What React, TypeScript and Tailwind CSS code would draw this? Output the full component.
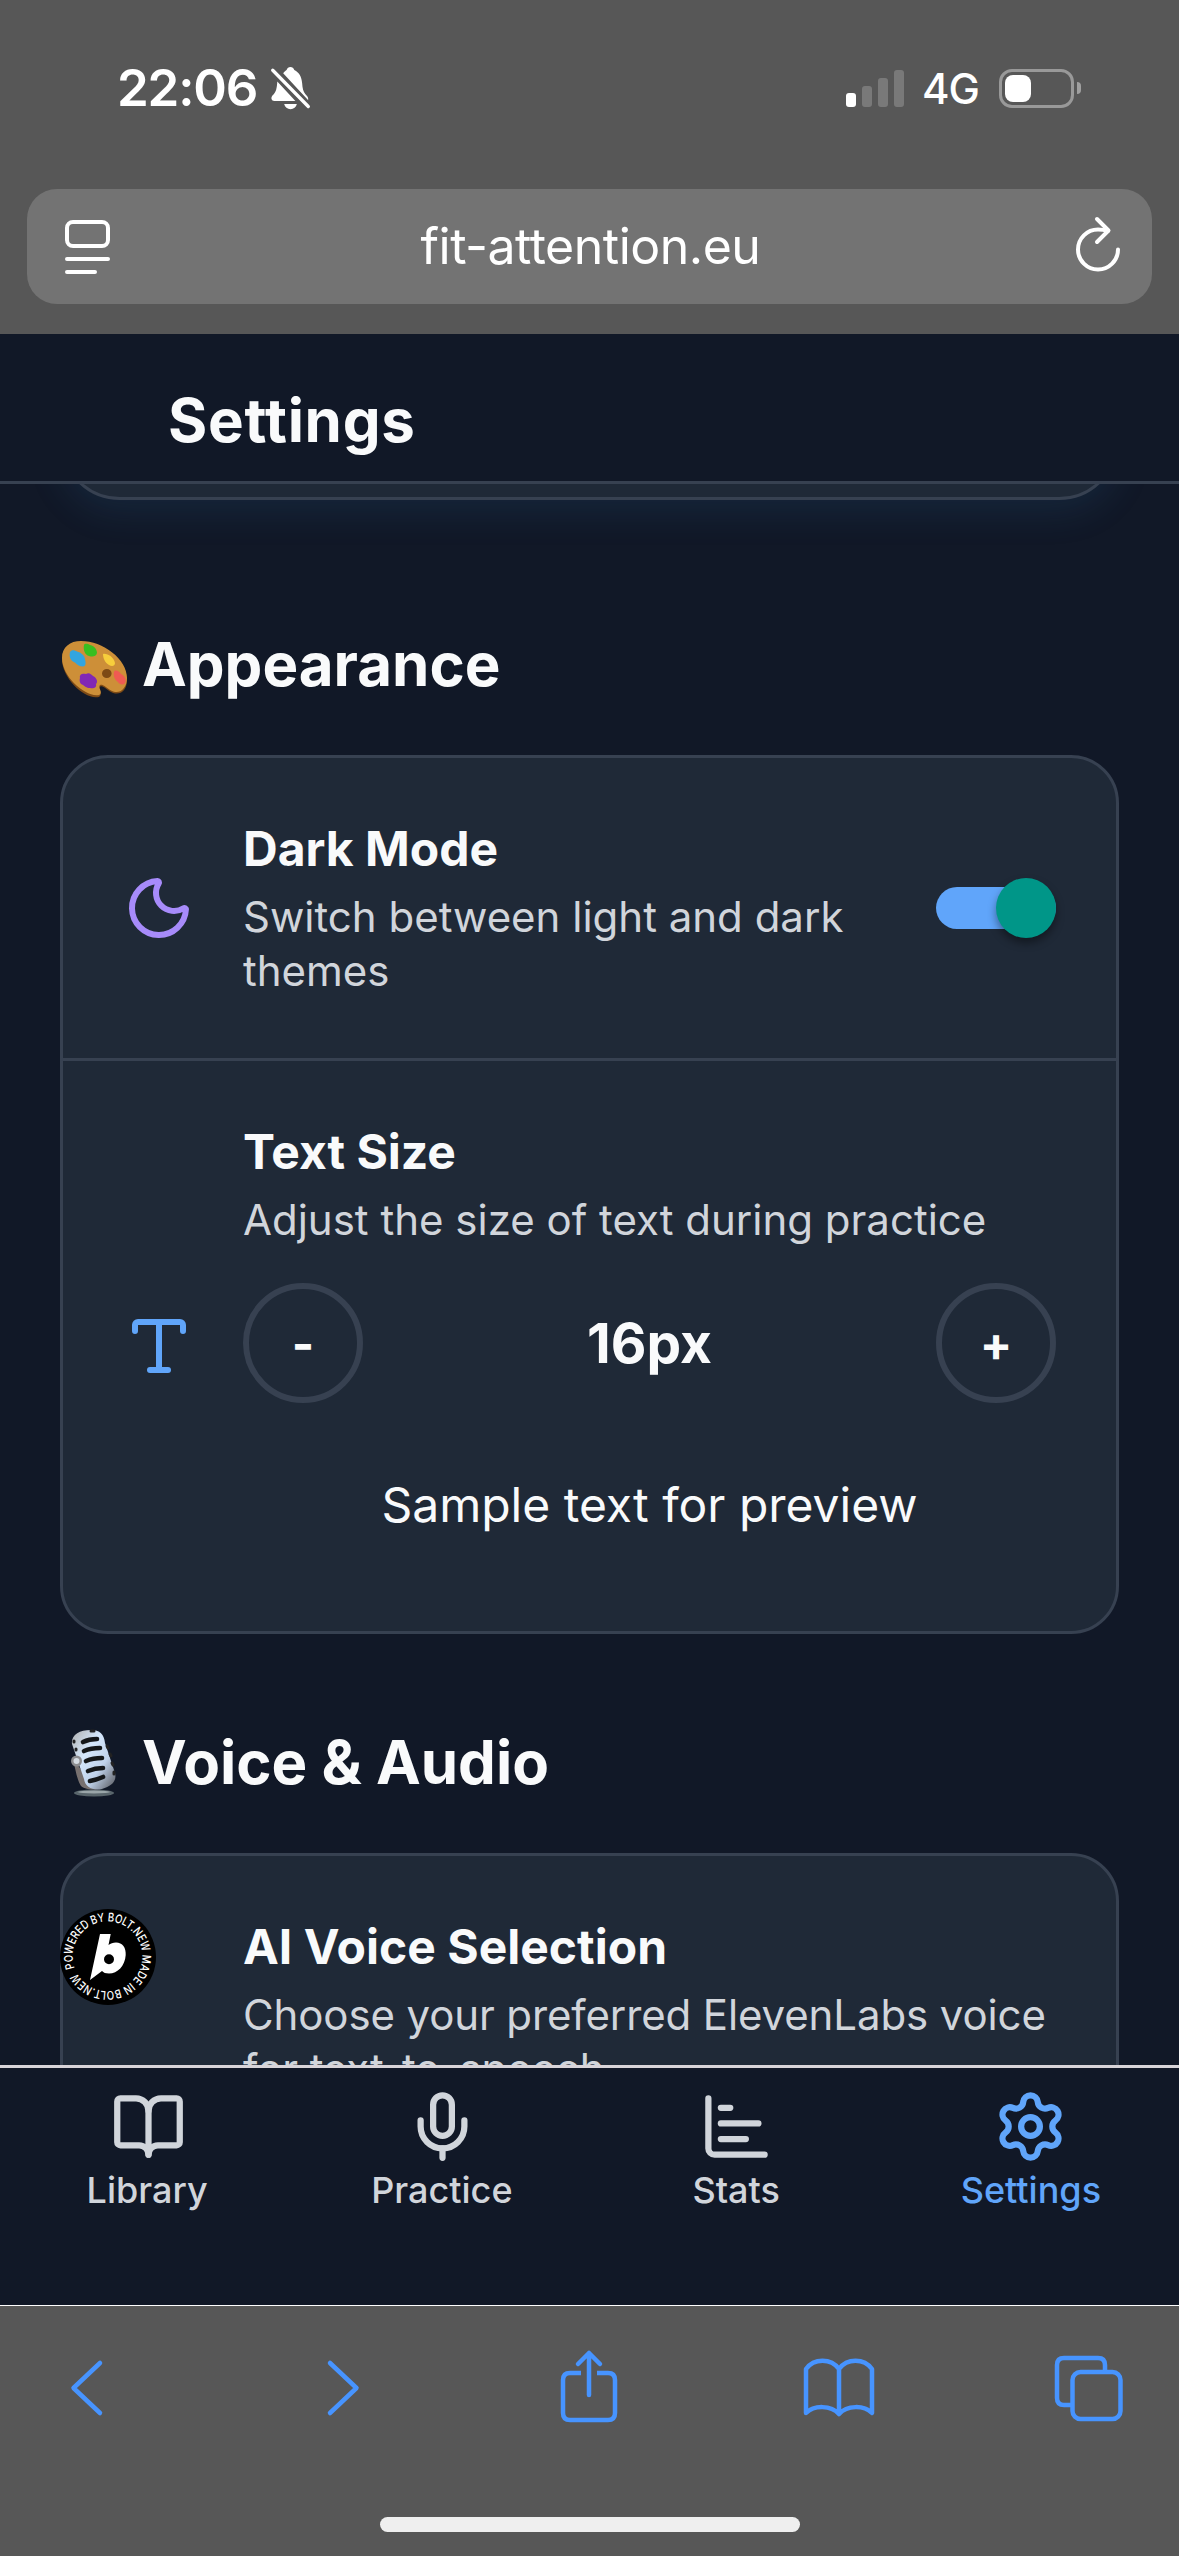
import React from 'react'
import { BookOpen, ChartBar, Mic, Moon, Settings, Type } from 'lucide-react'

function StatusBar() {
  return (
    <div className="flex h-[189px] items-start justify-between pl-[117px] pr-[98px] pt-[57px]">
      <div className="flex items-center">
        <span className="text-[51px] leading-[62px] font-semibold tracking-[-1.2px] text-white">22:06</span>
        <svg className="ml-[13px] h-[44px] w-[41px]" viewBox="0 0 42 44" preserveAspectRatio="none" fill="white">
          <path d="M13.5 7.2C15 5.6 16 4.6 17 4c.6-2 2-3 3.900-3s3.400 1 4 3c5 2.400 7.500 6.800 8 13 .4 5.500 1.200 8.600 3.200 11 2 2.200 3.400 3.400 3 6.200z" />
          <path d="M7.500 15.500 26 35H4.500C1.300 35 .6 32 2.500 29.600 6.500 26 7 22 7.500 15.500z" />
          <path d="M14.500 38h13c-.8 3.400-3.300 5.200-6.500 5.200s-5.700-1.800-6.500-5.200z" />
          <path d="M2.800 4.200 39.200 40.500" stroke="#575757" strokeWidth="8" />
          <path d="M2.800 4.200 39.200 40.500" stroke="white" strokeWidth="3.400" strokeLinecap="round" />
        </svg>
      </div>
      <div className="flex h-[62px] items-center">
        <div className="flex h-[37px] items-end gap-[6px]">
          <div className="h-[14px] w-[10px] rounded-[3px] bg-white"></div>
          <div className="h-[21px] w-[10px] rounded-[3px] bg-[#797979]"></div>
          <div className="h-[29px] w-[10px] rounded-[3px] bg-[#797979]"></div>
          <div className="h-[37px] w-[10px] rounded-[3px] bg-[#797979]"></div>
        </div>
        <span className="ml-[18px] w-[60px] pt-[2px] text-[42px] leading-[50px] font-medium tracking-[-1px] text-white">4G</span>
        <div className="ml-[17px] h-[39px] w-[75px] rounded-[13px] border-[3px] border-[#999999] p-[3px]">
          <div className="h-[27px] w-[26px] rounded-[8px] bg-white"></div>
        </div>
        <div className="ml-[3px] h-[12px] w-[4px] rounded-r-full bg-[#a0a0a0]"></div>
      </div>
    </div>
  )
}

function AddressBar() {
  return (
    <div className="mx-[27px] flex h-[115px] items-center justify-between rounded-[30px] bg-[#737373] pl-[37px] pr-[31px]">
      <svg className="h-[56px] w-[48px]" viewBox="0 0 48 56" fill="none" stroke="white" strokeWidth="4" strokeLinecap="round">
        <rect x="3" y="3" width="41" height="24" rx="6" />
        <path d="M3 40h41M3 53h28" />
      </svg>
      <span className="mr-[6px] mb-[2px] text-[50px] leading-[60px] tracking-[-0.5px] text-white">fit-attention.eu</span>
      <svg className="mb-[5px] h-[58px] w-[46px]" viewBox="0 0 46 58" fill="none" stroke="white" strokeWidth="4" strokeLinecap="round" strokeLinejoin="round">
        <path d="M43 34.500A20 20 0 1 1 23 14.500c3.500 0 6.500.4 10 1.500" />
        <path d="m22 4 11.500 11.500L22 27" />
      </svg>
    </div>
  )
}

function PaletteIcon() {
  return (
    <svg className="mr-[13px] h-[72px] w-[69px]" viewBox="0 0 69 72">
      <path d="M2 31C2 20 10 14 21 14c22 0 46 18 46 38C67 61 62 66.500 55 65.500c-5-1-8-5-12-6.800-3.500-1.500-4 1-2.700 4.500 1 4-.1 6-3.800 6C23 70 2 50 2 31z" fill="#7d4a15" />
      <path fillRule="evenodd" d="M2 30C2 19 10 13 21 13c22 0 46 18 46 37C67 59.500 61 65 55 64c-5-1-8-5-12-6.800-3.500-1.500-4.600 1-2.800 4.500 1.500 3.500.4 5.800-3.700 5.500C23 67 2 48 2 30zm40 15.500a4.800 4.500 0 1 0 9.600 0 4.800 4.500 0 1 0-9.600 0z" fill="#cd8f38" />
      <path d="M10 24c2-3 5-1.500 7-.5 4 1 8 4 8 8 1 3 1 7-2 7-4 0-6-2-8-4-5-2-6-6-5-10.500z" fill="#32a5df" />
      <path d="M24 17c1-2 4-1 6 0 5 1 7 5 7 8-1 4-5 4-8 3-4-1-6-6-5-11z" fill="#38bf20" />
      <path d="M43 26c4-1 11 3 12 9 0 3-3 4-6 2-4-2-6-7-6-11z" fill="#f7ce3c" />
      <path d="M54 44c1-3 5-1 7 2 4 2 6 6 4 9-2 3-6 1-7-1-3-2-5-6-4-10z" fill="#ef5b52" />
      <path d="M20 50c-1-4 3-5 6-4 3-2 5 0 7 2 4 2 5 6 3 8 1 4-3 5-6 4-4 0-5-2-7-3-3-1-4-4-3-7z" fill="#8128b4" />
    </svg>
  )
}

function MicrophoneIcon() {
  return (
    <svg className="mr-[13px] h-[72px] w-[69px]" viewBox="0 0 69 72">
      <defs>
        <linearGradient id="metal" x1="0" y1="0" x2="1" y2="1">
          <stop offset="0" stopColor="#b0b0b0" />
          <stop offset=".35" stopColor="#d5e7fb" />
          <stop offset=".65" stopColor="#c0d2ea" />
          <stop offset="1" stopColor="#55555a" />
        </linearGradient>
      </defs>
      <ellipse cx="34" cy="67" rx="20" ry="3.500" fill="#59656b" />
      <ellipse cx="34" cy="66" rx="16" ry="1.500" fill="#9aa5a8" />
      <path d="M13 32c2 10 4 22 8 28 4 4 16 5 22 1l-3-5c-8 2-14-1-16-8z" fill="#77706f" />
      <path d="M12 18C11 9 19 4 31 4c9 0 13 4 14 13l10 30c2 8-3 13-13 16-9 2-17-2-18-10z" fill="url(#metal)" />
      <g stroke="#151719" strokeWidth="4.600" strokeLinecap="round">
        <path d="M23 16q6-3 14-3" />
        <path d="M24 25q7-3 16-3" />
        <path d="M26 35q7-3 16-3" />
        <path d="M28 45q7-3 15-3" />
        <path d="M30 55q6-1 13-4" />
      </g>
      <path d="M14 15v1M16 23v1M47 20l1 2M50 28l1 2M52 37l1 2M54 46v2M31 5h3" stroke="#222" strokeWidth="3" strokeLinecap="round" />
      <circle cx="16.500" cy="35" r="5.500" fill="#8c8c8f" />
      <circle cx="16.500" cy="35" r="3" fill="#d5dbe2" />
    </svg>
  )
}

function BoltBadge() {
  return (
    <svg className="absolute left-[60px] top-[1425px] h-[96px] w-[96px]" viewBox="0 0 96 96">
      <defs>
        <path id="ring" d="M14.700 59A34.800 34.800 0 1 1 19.500 68A34.800 34.800 0 0 1 14.700 59" />
      </defs>
      <circle cx="48" cy="48" r="48" fill="black" />
      <text fill="white" fontSize="12" fontWeight="500">
        <textPath href="#ring" textLength="213" lengthAdjust="spacingAndGlyphs">POWERED BY BOLT.NEW MADE IN BOLT.NEW</textPath>
      </text>
      {/* bolt mark */}
      <path
        fillRule="evenodd"
        d="M40 25h10.700l-2.200 11c2-1.800 4.500-2.600 7.500-2.600 6.500.2 10.200 5 9.700 12.600C65 57 57.500 64.500 49 64.500c-3.500 0-5.500-.8-7-2.500L30 71zM44 50.300a5 5 0 1 0 10 0 5 5 0 1 0-10 0z"
        fill="white"
      />
    </svg>
  )
}

function Header() {
  return (
    <div className="h-[150px] border-b-[3px] border-[#374151] pl-[168px] pt-[50px]">
      <h1 className="text-[60px] leading-[72px] font-bold tracking-[0.7px]">Settings</h1>
    </div>
  )
}

function SettingText({ title, text }: { title: string; text: string }) {
  return (
    <>
      <p className="mb-[12px] text-[48px] leading-[58px] font-bold">{title}</p>
      <p className="text-[42px] leading-[54px] text-[#d1d5db]">{text}</p>
    </>
  )
}

function TabBar() {
  return (
    <div className="flex h-[240px] border-t-[3px] border-[#d8d4d9] px-[1px] pt-[21px] text-[36px] leading-[44px] font-medium text-[#d1d5db]">
      <div className="flex flex-1 flex-col items-center gap-[4px]">
        <BookOpen size={75} />
        <span className="mr-[2px]">Library</span>
      </div>
      <div className="flex flex-1 flex-col items-center gap-[4px]">
        <Mic size={75} />
        <span className="mr-[1px]">Practice</span>
      </div>
      <div className="flex flex-1 flex-col items-center gap-[4px]">
        <ChartBar size={75} />
        <span className="mr-[1px]">Stats</span>
      </div>
      <div className="flex flex-1 flex-col items-center gap-[4px] text-[#60a5fa]">
        <Settings size={75} />
        <span>Settings</span>
      </div>
    </div>
  )
}

function BrowserToolbar() {
  return (
    <div className="flex h-[251px] flex-col items-center border-t border-white bg-[#575757]">
      <div className="flex h-[211px] w-full items-start pl-[69px] pt-[43px] text-[#4794ff]">
        <svg className="h-[76px] w-[36px]" viewBox="0 0 36 76" fill="none" stroke="currentColor" strokeWidth="4.500" strokeLinecap="round" strokeLinejoin="round">
          <path d="M31 14 4.500 39 31 64" />
        </svg>
        <svg className="ml-[220px] h-[76px] w-[36px]" viewBox="0 0 36 76" fill="none" stroke="currentColor" strokeWidth="4.500" strokeLinecap="round" strokeLinejoin="round">
          <path d="M5 14 31.500 39 5 64" />
        </svg>
        <svg className="ml-[198px] h-[76px] w-[60px]" viewBox="0 0 60 76" fill="none" stroke="currentColor" strokeWidth="4.500" strokeLinejoin="round">
          <path d="M22 24h-11q-7 0-7 7v33q0 7 7 7h38q7 0 7-7v-33q0-7-7-7h-11" />
          <path d="M30 46V4M19 15 30 4l11 11" strokeLinecap="round" />
        </svg>
        <svg className="ml-[184px] h-[76px] w-[72px]" viewBox="0 0 72 76" fill="none" stroke="currentColor" strokeWidth="4.500" strokeLinecap="round" strokeLinejoin="round">
          <path d="M36 20C28 9 11 9 3 20v44c8-8 25-8 33 1 8-9 25-9 33-1V20C61 9 44 9 36 20zv45" />
        </svg>
        <svg className="ml-[179px] h-[76px] w-[70px]" viewBox="0 0 70 76" fill="none" stroke="currentColor" strokeWidth="4.500">
          <rect x="18.500" y="23" width="48" height="47" rx="8" />
          <path d="M18 56h-8q-7 0-7-7V16q0-7 7-7h34q7 0 7 7v7" />
        </svg>
      </div>
      <div className="h-[15px] w-[420px] rounded-full bg-[#efefef]"></div>
    </div>
  )
}

export default function App() {
  return (
    <div className="h-[2556px] w-[1179px] overflow-hidden bg-[#111827] font-['Inter',sans-serif] text-[#f9fafb] [font-optical-sizing:none]">
      <div className="h-[334px] bg-[#575757]">
        <StatusBar />
        <AddressBar />
      </div>
      <Header />
      <main className="relative h-[1581px] overflow-hidden px-[60px]">
        <div className="-mt-[134px] h-[150px] rounded-[60px] border-[3px] border-[#374151] bg-[#1f2937] shadow-[0_12px_36px_rgba(56,135,195,0.13)]"></div>

        <h2 className="mt-[128px] flex text-[60px] leading-[72px] font-bold">
          <PaletteIcon />
          Appearance
        </h2>
        <div className="mt-[55px] rounded-[48px] border-[3px] border-[#374151] bg-[#1f2937]">
          <div className="flex h-[303px] items-center border-b-[3px] border-[#374151] px-[60px]">
            <Moon size={72} className="mr-[48px] shrink-0 text-[#a78bfa]" />
            <div className="mr-[48px] flex-1 pt-[2px]">
              <SettingText title="Dark Mode" text="Switch between light and dark themes" />
            </div>
            <div className="flex h-[42px] w-[120px] items-center justify-end rounded-full bg-[#60a5fa]">
              <div className="size-[60px] shrink-0 rounded-full bg-[#009688] shadow-[0_5px_9px_rgba(0,0,0,0.4)]"></div>
            </div>
          </div>
          <div className="flex h-[570px] items-center px-[60px]">
            <Type size={72} className="mr-[48px] shrink-0 text-[#60a5fa]" />
            <div className="flex-1 pt-[2px]">
              <SettingText title="Text Size" text="Adjust the size of text during practice" />
              <div className="mt-[36px] flex items-center justify-between">
                <button className="size-[120px] rounded-full border-[6px] border-[#374151] pt-[2px] text-[48px] font-bold">-</button>
                <span className="text-[55px] leading-[66px] font-bold">16px</span>
                <button className="size-[120px] rounded-full border-[6px] border-[#374151] pt-[2px] text-[48px] font-bold">+</button>
              </div>
              <p className="mt-[36px] p-[30px] text-center text-[48px] leading-[72px]">Sample text for preview</p>
            </div>
          </div>
        </div>

        <h2 className="mt-[92px] flex text-[60px] leading-[72px] font-bold">
          <MicrophoneIcon />
          Voice &amp; Audio
        </h2>
        <div className="mt-[55px] h-[420px] rounded-[48px] border-[3px] border-[#374151] bg-[#1f2937] pt-[62px] pl-[180px] pr-[60px] [&>p+p]:tracking-[-0.12px]">
          <SettingText title="AI Voice Selection" text="Choose your preferred ElevenLabs voice for text-to-speech" />
        </div>
        <BoltBadge />
      </main>
      <TabBar />
      <BrowserToolbar />
    </div>
  )
}
